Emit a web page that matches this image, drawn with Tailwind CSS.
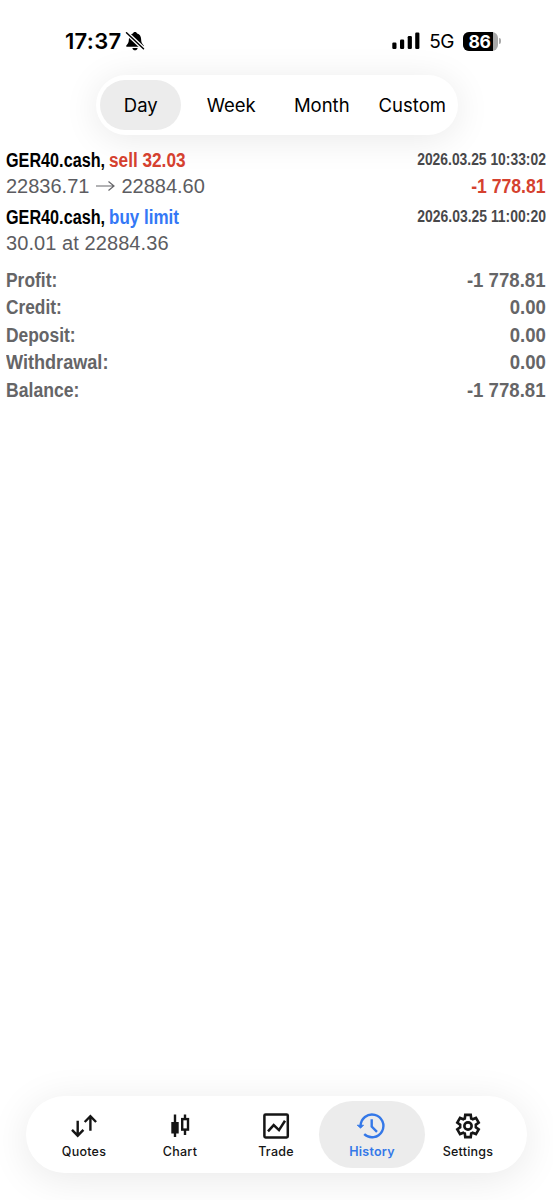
<!DOCTYPE html>
<html lang="en">
<head>
  <meta charset="UTF-8">
  <meta name="viewport" content="width=device-width, initial-scale=1.0">
  <title>History</title>
  <script src="https://cdn.jsdelivr.net/npm/@tailwindcss/browser@4"></script>
</head>
<body class="bg-white font-['Inter',sans-serif] text-black">
  <div class="flex h-[1200px] w-[553px] flex-col overflow-hidden">

    <!-- Status bar -->
    <header class="flex h-[75px] shrink-0 items-start justify-between pt-[27px] pr-[52px] pl-[65px]">
      <div class="flex h-7 items-center gap-1">
        <span class="text-[22px] leading-7 font-semibold tracking-[0.3px]">17:37</span>
        <svg class="h-5 w-5" viewBox="0 0 20 20">
          <path d="M10 1c-1.100 0-1.900.7-2.100 1.500C5.200 3.400 4 5.400 3.900 8c-.1 3.600-.8 4.600-2.400 6.200-.6.600-.3 1.600.6 1.600h15.800c.9 0 1.200-1 .6-1.600-1.600-1.600-2.300-2.600-2.400-6.200-.1-2.600-1.300-4.600-4-5.500C11.900 1.700 11.100 1 10 1z" />
          <path d="M7.400 16.900h5.200c-.2 1.400-1.300 2.300-2.600 2.300s-2.400-.9-2.600-2.300z" />
          <path d="M1.500 1.800L18.500 17.800" stroke="#fff" stroke-width="4" />
          <path d="M1.500 1.800L18.500 17.800" stroke="#000" stroke-width="1.500" stroke-linecap="round" />
        </svg>
      </div>
      <div class="flex h-7 items-center">
        <svg class="mr-[9px] h-[18px] w-7" viewBox="0 0 28 18">
          <rect x="0.300" y="10.600" width="4.200" height="6.400" rx="1.200" />
          <rect x="8" y="7.500" width="4.200" height="9.500" rx="1.200" />
          <rect x="15.700" y="4" width="4.200" height="13" rx="1.200" />
          <rect x="23.200" y="0.600" width="4.200" height="16.400" rx="1.200" />
        </svg>
        <span class="mr-[9px] pt-px text-[19px] leading-7 tracking-[-0.5px]">5G</span>
        <div class="flex h-[19px] w-[35px] items-center rounded-[6px] bg-[#a9a9a9]">
          <div class="flex h-full w-[30px] items-center justify-center rounded-l-[6px] bg-black pl-[3px] text-[17.500px] leading-[19px] font-bold tracking-[-0.3px] text-white">86</div>
        </div>
        <div class="ml-[1px] h-[6px] w-[2px] rounded-r-full bg-[#a9a9a9]"></div>
      </div>
    </header>

    <!-- Period selector -->
    <nav class="mx-auto flex h-[60px] w-[362px] shrink-0 items-center rounded-full bg-white text-[18.500px] shadow-[0_4px_36px_rgba(0,0,0,0.09)]">
      <a class="flex flex-1 justify-center"><span class="flex h-[50px] w-[81px] items-center justify-center rounded-full bg-[#ececec] pt-[2px]">Day</span></a>
      <a class="flex flex-1 justify-center pt-[2px]">Week</a>
      <a class="flex flex-1 justify-center pt-[2px]">Month</a>
      <a class="flex flex-1 justify-center pt-[2px]">Custom</a>
    </nav>

    <!-- Deals and orders -->
    <main class="flex-1 pt-[11.500px] pr-[7px] pl-[6px] font-['Liberation_Sans',sans-serif] whitespace-nowrap">
      <section class="mb-[4.500px]">
        <div class="flex h-[26px] items-center text-[20px] font-bold">
          <span class="w-[102.500px]"><span class="inline-block origin-left scale-x-[0.81]">GER40.cash,</span></span>
          <span class="origin-left scale-x-[0.86] text-[#d5412f]">sell 32.03</span>
          <span class="ml-auto origin-right scale-x-[0.815] text-[17px] text-[#48484a]">2026.03.25 10:33:02</span>
        </div>
        <div class="flex h-[26px] items-center text-[20px] text-[#5c5c61]">
          <span>22836.71</span>
          <svg class="mx-[6.500px] h-4 w-[19px]" viewBox="0 0 19 16" fill="none" stroke="#66666a" stroke-width="1.200"><path d="M0 8h18M12.500 3.500L18 8l-5.500 4.500" /></svg>
          <span>22884.60</span>
          <span class="ml-auto origin-right scale-x-[0.88] text-[20px] font-bold text-[#d5412f]">-1 778.81</span>
        </div>
      </section>
      <section>
        <div class="flex h-[27px] items-center text-[20px] font-bold">
          <span class="w-[102.500px]"><span class="inline-block origin-left scale-x-[0.81]">GER40.cash,</span></span>
          <span class="origin-left scale-x-[0.85] text-[#3478f6]">buy limit</span>
          <span class="ml-auto origin-right scale-x-[0.82] text-[17px] text-[#48484a]">2026.03.25 11:00:20</span>
        </div>
        <div class="flex h-[25px] items-center text-[20px] tracking-[0.08px] text-[#5c5c61]">30.01 at 22884.36</div>
      </section>

      <dl class="mt-[11.500px] text-[20px] leading-[27.600px] font-bold text-[#656567]">
        <div class="flex justify-between"><dt class="origin-left scale-x-[0.87]">Profit:</dt><dd class="origin-right scale-x-[0.93]">-1 778.81</dd></div>
        <div class="flex justify-between"><dt class="origin-left scale-x-[0.865]">Credit:</dt><dd class="origin-right scale-x-[0.93]">0.00</dd></div>
        <div class="flex justify-between"><dt class="origin-left scale-x-[0.87]">Deposit:</dt><dd class="origin-right scale-x-[0.93]">0.00</dd></div>
        <div class="flex justify-between"><dt class="origin-left scale-x-[0.905]">Withdrawal:</dt><dd class="origin-right scale-x-[0.93]">0.00</dd></div>
        <div class="flex justify-between"><dt class="origin-left scale-x-[0.88]">Balance:</dt><dd class="origin-right scale-x-[0.93]">-1 778.81</dd></div>
      </dl>
    </main>

    <!-- Tab bar -->
    <nav class="mx-auto mb-[27px] flex h-[77px] w-[501px] shrink-0 justify-center rounded-full bg-white pr-px text-[12.500px] font-medium tracking-[0.250px] text-[#151515] shadow-[0_6px_40px_rgba(0,0,0,0.09)]">
      <a class="flex w-24 flex-col items-center pt-4">
        <svg class="size-7" viewBox="0 0 28 28" fill="none" stroke="currentColor" stroke-width="2.400">
          <path d="M7.700 8.700v15M2 17.800l5.700 5.900 5.700-5.900M20.400 18.700V4.200M14.700 10l5.700-5.800 5.700 5.800" />
        </svg>
        <span class="mt-[2px] leading-5">Quotes</span>
      </a>
      <a class="flex w-24 flex-col items-center pt-4">
        <svg class="size-7" viewBox="0 0 28 28" fill="none" stroke="currentColor" stroke-width="2.400">
          <path d="M9 2.600V25M19 2.600v4.400M19 18v5" />
          <rect x="5.300" y="10" width="7.400" height="11.500" fill="currentColor" stroke="none" />
          <rect x="16.200" y="7.100" width="5.800" height="10.500" />
        </svg>
        <span class="mt-[2px] leading-5">Chart</span>
      </a>
      <a class="flex w-24 flex-col items-center pt-4">
        <svg class="size-7" viewBox="0 0 28 28" fill="none" stroke="currentColor" stroke-width="2.500">
          <rect x="2.400" y="2.400" width="23.400" height="23" rx="1.200" />
          <path d="M6 19.400l5.700-6.300 5.300 5L23 8.800" />
        </svg>
        <span class="mt-[2px] leading-5">Trade</span>
      </a>
      <a class="relative flex w-24 flex-col items-center pt-4 text-[#3478e8]">
        <span class="absolute top-[5px] -right-[5px] -left-[5px] h-[67px] rounded-full bg-[#ececec]"></span>
        <svg class="relative size-7 overflow-visible" viewBox="0 0 28 28" fill="none" stroke="currentColor" stroke-width="2.400">
          <path d="M2.600 14A11.400 11.400 0 1 1 6.200 22.200" />
          <path d="M-0.800 13.200L2.600 16.200L5.600 13.200z" fill="currentColor" stroke-width="0.800" />
          <path d="M13.700 7.200v7.300l5.300 5.300" />
        </svg>
        <span class="relative mt-[2px] leading-5 font-semibold">History</span>
      </a>
      <a class="flex w-24 flex-col items-center pt-4">
        <svg class="size-7" viewBox="-0.300 -0.300 24.600 24.600" fill="none" stroke="currentColor" stroke-width="2.300">
          <path d="M9.600 21.800l-.4-3.200q-.6-.2-1.300-.7l-2.900 1.200-2.400-4.100 2.500-1.900v-2.200L2.600 9 5 4.900l2.900 1.200q.6-.4 1.300-.7l.4-3.200h4.800l.4 3.200q.7.300 1.300.7L19 4.900 21.400 9l-2.500 1.900v2.200l2.500 1.900-2.400 4.100-2.900-1.200q-.6.500-1.300.7l-.4 3.200z" />
          <circle cx="12" cy="12" r="3.200" />
        </svg>
        <span class="mt-[2px] leading-5">Settings</span>
      </a>
    </nav>
  </div>
</body>
</html>
